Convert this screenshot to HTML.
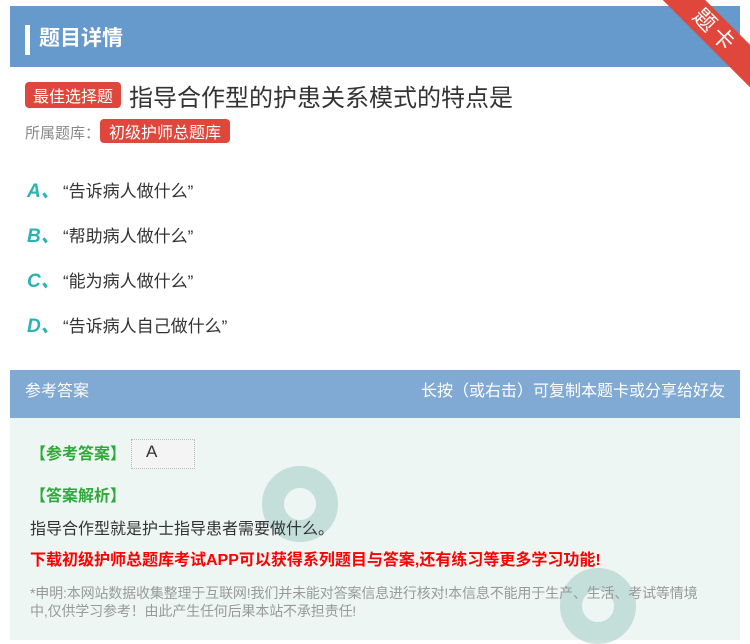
<!DOCTYPE html>
<html><head><meta charset="utf-8"><style>
*{margin:0;padding:0;box-sizing:border-box}
body{width:750px;height:640px;background:#fff;font-family:"Liberation Sans","Noto Sans CJK SC",sans-serif;position:relative;overflow:hidden}
.hd{position:absolute;left:10px;top:6px;width:730px;height:61px;background:#6699cc}
.hd .bar{position:absolute;left:15px;top:19px;width:5px;height:30px;background:#fff}
.hd .t{position:absolute;left:29px;top:16px;color:#fff;font-size:21px;font-weight:bold}
.rib{position:absolute;right:-30px;top:16px;width:130px;height:30px;background:#e0473c;transform:rotate(45deg);color:#fff;font-size:22px;text-align:center;line-height:30px;letter-spacing:4px}
.tag{display:inline-block;background:#e0473c;color:#fff;border-radius:4px}
.q{position:absolute;left:25px;top:78px;font-size:24px;color:#333;white-space:nowrap}
.q .tag{font-size:16px;padding:1px 8px;vertical-align:4px;margin-right:8px}
.lib{position:absolute;left:25px;top:119px;font-size:15px;color:#888}
.lib .tag{font-size:16px;padding:0 9px}
.op{position:absolute;left:27px;font-size:17px;color:#333}
.op b{color:#2ab3b0;font-style:italic;font-size:19px;display:inline-block;width:36px}
.ah{position:absolute;left:10px;top:370px;width:730px;height:48px;background:#80a9d3;color:#fff;font-size:16px;line-height:44px;padding:0 15px}
.ah span{float:right}
.ab{position:absolute;left:10px;top:418px;width:730px;height:222px;background:#eef6f4}
.g{position:absolute;left:30px;color:#2eaa3a;font-size:16px;font-weight:bold}
.ring{position:absolute;border-radius:50%;border:22px solid #a8cfc6;opacity:.6}
</style></head><body>
<div class="hd"><div class="bar"></div><div class="t">题目详情</div></div>
<div class="rib">题卡</div>
<div class="q"><span class="tag">最佳选择题</span>指导合作型的护患关系模式的特点是</div>
<div class="lib">所属题库：<span class="tag">初级护师总题库</span></div>
<div class="op" style="top:176px"><b>A、</b>“告诉病人做什么”</div>
<div class="op" style="top:221px"><b>B、</b>“帮助病人做什么”</div>
<div class="op" style="top:266px"><b>C、</b>“能为病人做什么”</div>
<div class="op" style="top:311px"><b>D、</b>“告诉病人自己做什么”</div>
<div class="ah">参考答案<span>长按（或右击）可复制本题卡或分享给好友</span></div>
<div class="ab"></div>
<div class="ring" style="left:262px;top:466px;width:76px;height:76px"></div>
<div class="ring" style="left:560px;top:568px;width:76px;height:76px"></div>
<div class="g" style="top:440px">【参考答案】</div>
<div style="position:absolute;left:131px;top:439px;width:64px;height:30px;background:#f4f4f4;border:1px dotted #bbb;font-size:17px;color:#333;padding:2px 0 0 14px">A</div>
<div class="g" style="top:482px">【答案解析】</div>
<div style="position:absolute;left:30px;top:515px;font-size:16px;color:#333">指导合作型就是护士指导患者需要做什么。</div>
<div style="position:absolute;left:30px;top:546px;font-size:16px;color:#f00;font-weight:bold;white-space:nowrap">下载初级护师总题库考试APP可以获得系列题目与答案,还有练习等更多学习功能!</div>
<div style="position:absolute;left:30px;top:584px;width:700px;font-size:14px;color:#999;line-height:18px;letter-spacing:-0.15px;white-space:nowrap">*申明:本网站数据收集整理于互联网!我们并未能对答案信息进行核对!本信息不能用于生产、生活、考试等情境<br>中,仅供学习参考！由此产生任何后果本站不承担责任!</div>
</body></html>
